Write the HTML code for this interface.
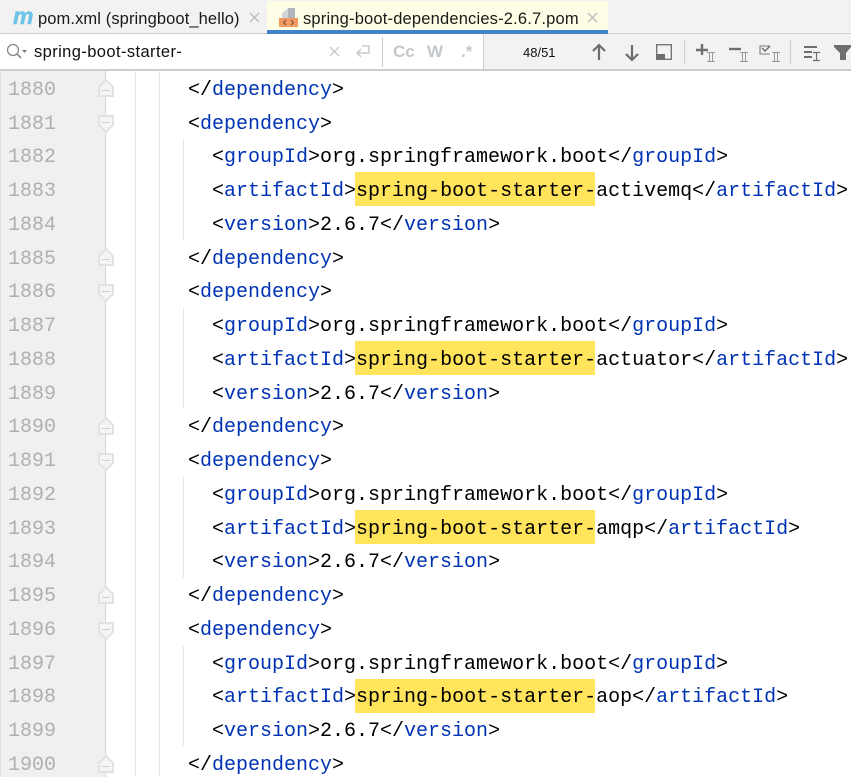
<!DOCTYPE html>
<html><head><meta charset="utf-8">
<style>
*{margin:0;padding:0;box-sizing:border-box}
html,body{width:851px;height:777px;overflow:hidden;background:#fff}
body{position:relative;font-family:"Liberation Sans",sans-serif}
.a{position:absolute}
.l{position:absolute;left:0;height:34px;line-height:34px;margin-top:2px;font-family:"Liberation Mono",monospace;font-size:20px;color:#000;white-space:pre}
.c{left:188px}
.n{left:8px;color:#adb0b0}
.l b{font-weight:normal;color:#0033b3}
.h{position:absolute;left:355px;width:240px;height:34px;background:#ffe45c}
.g{position:absolute;background:#e6e6e6;width:1px}
svg{position:absolute;overflow:visible}
</style></head><body>
<div class="a" style="left:0;top:0;width:851px;height:34px;background:#f2f2f2"></div>
<div class="a" style="left:0;top:33px;width:851px;height:1px;background:#d1d1d1"></div>
<div class="a" style="left:267px;top:1px;width:341px;height:29px;background:#fefee6"></div>
<div class="a" style="left:267px;top:30px;width:341px;height:4px;background:#4083c9"></div>
<div class="a" style="left:13px;top:3px;font:italic bold 23px 'Liberation Sans',sans-serif;color:#6cc5e6;-webkit-text-stroke:.5px #6cc5e6">m</div>
<div class="a" style="left:38px;top:8px;font-size:16.5px;line-height:22px;letter-spacing:.1px;color:#1a1a1a;white-space:pre">pom.xml (springboot_hello)</div>
<div class="a" style="left:303px;top:8px;font-size:16.5px;line-height:22px;letter-spacing:.18px;color:#1a1a1a;white-space:pre">spring-boot-dependencies-2.6.7.pom</div>
<svg style="left:0;top:0" width="851" height="34">
<path d="M250 13l9 9M259 13l-9 9M588 13l9 9M597 13l-9 9" stroke="#bdbdbd" stroke-width="1.4" fill="none"/>
<path d="M288 8v10h-6v-5z" fill="#d3d6d8"/>
<path d="M288 8h7v10h-7z" fill="#b0b5b9"/>
<rect x="279" y="18" width="19" height="9" fill="#f39a63"/>
<path d="M286 20l-2.500 2.500 2.500 2.500M291 20l2.500 2.500-2.500 2.500" stroke="#6b4a3a" stroke-width="1" fill="none"/>
</svg>
<div class="a" style="left:0;top:34px;width:483px;height:35px;background:#fff"></div>
<div class="a" style="left:483px;top:34px;width:368px;height:35px;background:#f2f2f2"></div>
<svg style="left:0;top:34px" width="851" height="36">
<circle cx="13" cy="16" r="5.500" fill="none" stroke="#8a8a8a" stroke-width="1.300"/>
<path d="M17 20l4 4" stroke="#8a8a8a" stroke-width="1.600"/>
<path d="M22 16h5l-2.500 3z" fill="#777"/>
<path d="M330 13l9 9M339 13l-9 9" stroke="#c8c8c8" stroke-width="1.300" fill="none"/>
<path d="M362 12h7v7h-12M361 15l-4 4 4 4" stroke="#c8cccd" stroke-width="1.500" fill="none"/>
<path d="M599 26V11M593 17l6-6 6 6M632 11V26M626 20l6 6 6-6" stroke="#6e6e6e" stroke-width="2.200" fill="none"/>
<rect x="656.700" y="10.700" width="14.600" height="14.600" fill="none" stroke="#6e6e6e" stroke-width="1.300"/>
<rect x="656" y="20" width="9" height="6" fill="#6e6e6e"/>
<rect x="684" y="6" width="1" height="24" fill="#cdcdcd"/>
<rect x="790" y="6" width="1" height="24" fill="#cdcdcd"/>
<path d="M696 16h12M702 10v11" stroke="#6e6e6e" stroke-width="2.400" fill="none"/>
<path d="M729 15h12" stroke="#6e6e6e" stroke-width="2.400" fill="none"/>
<path d="M770 12h-10v8h10" stroke="#7a7a7a" stroke-width="1.100" fill="none"/>
<path d="M762 14l3 3 5-5" stroke="#6e6e6e" stroke-width="1.500" fill="none"/>
<g stroke="#9a9a9a" stroke-width="1" fill="none">
<path d="M707 18.500h8M707 27.500h8M709.500 18.500v9M712.500 18.500v9"/>
<path d="M740 18.500h8M740 27.500h8M742.500 18.500v9M745.500 18.500v9"/>
<path d="M772 18.500h8M772 27.500h8M774.500 18.500v9M777.500 18.500v9"/>
</g>
<path d="M804 13h13M804 18h8M804 23h8" stroke="#6e6e6e" stroke-width="2" fill="none"/>
<path d="M813 18.500h7M813 26.500h7M816.500 18.500v8" stroke="#6e6e6e" stroke-width="1.200" fill="none"/>
<path d="M834 11h17v2l-5 6v7h-6v-7l-6-6z" fill="#6e6e6e"/>
</svg>
<div class="a" style="left:34px;top:41px;font-size:16.5px;line-height:22px;letter-spacing:.4px;color:#111;white-space:pre">spring-boot-starter-</div>
<div class="a" style="left:393px;top:41px;font:bold 17px/22px 'Liberation Sans',sans-serif;color:#c3c8cc;white-space:pre">Cc</div>
<div class="a" style="left:427px;top:41px;font:bold 17px/22px 'Liberation Sans',sans-serif;color:#c3c8cc">W</div>
<div class="a" style="left:461px;top:41px;font:bold 17px/22px 'Liberation Sans',sans-serif;color:#c3c8cc">.*</div>
<div class="a" style="left:523px;top:42px;font-size:13px;line-height:22px;color:#111">48/51</div>
<div class="a" style="left:382px;top:37px;width:1px;height:30px;background:#cfcfcf"></div>
<div class="a" style="left:483px;top:34px;width:1px;height:35px;background:#cfcfcf"></div>
<div class="a" style="left:0;top:69px;width:851px;height:2px;background:#cdcdcd"></div>

<div class="a" style="left:0;top:71px;width:105px;height:706px;background:#f0f0f0"></div>
<div class="a" style="left:0;top:71px;width:1px;height:706px;background:#e0e0e0"></div>
<div class="a" style="left:105px;top:71px;width:1px;height:706px;background:#d4d4d4"></div>
<div class="g" style="left:135px;top:71px;height:706px"></div>
<div class="g" style="left:159px;top:71px;height:706px"></div>
<div class="g" style="left:183px;top:139px;height:102px"></div>
<div class="g" style="left:183px;top:308px;height:101px"></div>
<div class="g" style="left:183px;top:477px;height:101px"></div>
<div class="g" style="left:183px;top:646px;height:100px"></div>

<div class="h" style="top:172px"></div>
<div class="h" style="top:341px"></div>
<div class="h" style="top:510px"></div>
<div class="h" style="top:679px"></div>

<svg style="left:0;top:0" width="851" height="777">
<g fill="#f5f5f5" stroke="#e2e2e2" stroke-width="2">
<path d="M99 87l7-7 7 7v9H99z"/><path d="M99 116h14v9l-7 7-7-7z"/>
<path d="M99 256l7-7 7 7v9H99z"/><path d="M99 285h14v9l-7 7-7-7z"/>
<path d="M99 425l7-7 7 7v9H99z"/><path d="M99 454h14v9l-7 7-7-7z"/>
<path d="M99 594l7-7 7 7v9H99z"/><path d="M99 623h14v9l-7 7-7-7z"/>
<path d="M99 763l7-7 7 7v9H99z"/>
</g>
<path d="M102 90.500h8M102 122.500h8M102 259.500h8M102 291.500h8M102 428.500h8M102 460.500h8M102 597.500h8M102 629.500h8M102 766.500h8" stroke="#d0d0d0" stroke-width="1"/>
</svg>

<div class="l n" style="top:72px">1880</div><div class="l c" style="top:72px">&lt;/<b>dependency</b>&gt;</div>
<div class="l n" style="top:106px">1881</div><div class="l" style="left:188px;top:106px">&lt;<b>dependency</b>&gt;</div>
<div class="l n" style="top:139px">1882</div><div class="l" style="left:212px;top:139px">&lt;<b>groupId</b>&gt;org.springframework.boot&lt;/<b>groupId</b>&gt;</div>
<div class="l n" style="top:173px">1883</div><div class="l" style="left:212px;top:173px">&lt;<b>artifactId</b>&gt;spring-boot-starter-activemq&lt;/<b>artifactId</b>&gt;</div>
<div class="l n" style="top:207px">1884</div><div class="l" style="left:212px;top:207px">&lt;<b>version</b>&gt;2.6.7&lt;/<b>version</b>&gt;</div>
<div class="l n" style="top:241px">1885</div><div class="l c" style="top:241px">&lt;/<b>dependency</b>&gt;</div>
<div class="l n" style="top:274px">1886</div><div class="l" style="left:188px;top:274px">&lt;<b>dependency</b>&gt;</div>
<div class="l n" style="top:308px">1887</div><div class="l" style="left:212px;top:308px">&lt;<b>groupId</b>&gt;org.springframework.boot&lt;/<b>groupId</b>&gt;</div>
<div class="l n" style="top:342px">1888</div><div class="l" style="left:212px;top:342px">&lt;<b>artifactId</b>&gt;spring-boot-starter-actuator&lt;/<b>artifactId</b>&gt;</div>
<div class="l n" style="top:376px">1889</div><div class="l" style="left:212px;top:376px">&lt;<b>version</b>&gt;2.6.7&lt;/<b>version</b>&gt;</div>
<div class="l n" style="top:409px">1890</div><div class="l c" style="top:409px">&lt;/<b>dependency</b>&gt;</div>
<div class="l n" style="top:443px">1891</div><div class="l" style="left:188px;top:443px">&lt;<b>dependency</b>&gt;</div>
<div class="l n" style="top:477px">1892</div><div class="l" style="left:212px;top:477px">&lt;<b>groupId</b>&gt;org.springframework.boot&lt;/<b>groupId</b>&gt;</div>
<div class="l n" style="top:511px">1893</div><div class="l" style="left:212px;top:511px">&lt;<b>artifactId</b>&gt;spring-boot-starter-amqp&lt;/<b>artifactId</b>&gt;</div>
<div class="l n" style="top:544px">1894</div><div class="l" style="left:212px;top:544px">&lt;<b>version</b>&gt;2.6.7&lt;/<b>version</b>&gt;</div>
<div class="l n" style="top:578px">1895</div><div class="l c" style="top:578px">&lt;/<b>dependency</b>&gt;</div>
<div class="l n" style="top:612px">1896</div><div class="l" style="left:188px;top:612px">&lt;<b>dependency</b>&gt;</div>
<div class="l n" style="top:646px">1897</div><div class="l" style="left:212px;top:646px">&lt;<b>groupId</b>&gt;org.springframework.boot&lt;/<b>groupId</b>&gt;</div>
<div class="l n" style="top:679px">1898</div><div class="l" style="left:212px;top:679px">&lt;<b>artifactId</b>&gt;spring-boot-starter-aop&lt;/<b>artifactId</b>&gt;</div>
<div class="l n" style="top:713px">1899</div><div class="l" style="left:212px;top:713px">&lt;<b>version</b>&gt;2.6.7&lt;/<b>version</b>&gt;</div>
<div class="l n" style="top:747px">1900</div><div class="l c" style="top:747px">&lt;/<b>dependency</b>&gt;</div>
</body></html>
